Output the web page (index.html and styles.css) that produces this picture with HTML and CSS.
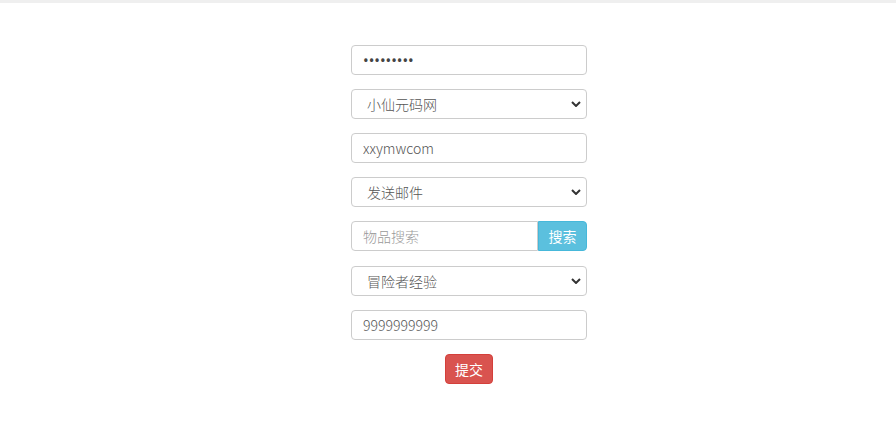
FILE: index.html
```html
<!DOCTYPE html>
<html lang="zh-CN">
<head>
<meta charset="utf-8">
<title>表单</title>
<link rel="stylesheet" href="styles.css">
</head>
<body>
<div class="topbar"></div>
<form class="form">
  <input class="control control-password" type="password" value="123456789">
  <div class="select-wrap">
    <select class="control select"><option>小仙元码网</option></select>
    <svg class="chev" width="10" height="6" viewBox="0 0 10 6"><path d="M1 1 L5 5 L9 1" fill="none" stroke="#333" stroke-width="2"/></svg>
  </div>
  <input class="control" type="text" value="xxymwcom">
  <div class="select-wrap">
    <select class="control select"><option>发送邮件</option></select>
    <svg class="chev" width="10" height="6" viewBox="0 0 10 6"><path d="M1 1 L5 5 L9 1" fill="none" stroke="#333" stroke-width="2"/></svg>
  </div>
  <div class="group">
    <input class="control group-input" type="text" placeholder="物品搜索">
    <button type="button" class="btn btn-info">搜索</button>
  </div>
  <div class="select-wrap">
    <select class="control select"><option>冒险者经验</option></select>
    <svg class="chev" width="10" height="6" viewBox="0 0 10 6"><path d="M1 1 L5 5 L9 1" fill="none" stroke="#333" stroke-width="2"/></svg>
  </div>
  <input class="control" type="text" value="9999999999">
  <div class="actions">
    <button type="button" class="btn btn-danger">提交</button>
  </div>
</form>
</body>
</html>
```
FILE: styles.css
```css
html, body {
  margin: 0;
  padding: 0;
  background: #fff;
}
body {
  font-family: "Noto Sans CJK SC", "Noto Sans", sans-serif;
  font-size: 14px;
  font-weight: 300;
  color: #555;
}
.topbar {
  height: 3px;
  background: #efefef;
}
.form {
  width: 236px;
  margin: 42px 0 0 351px;
  display: flex;
  flex-direction: column;
  gap: 14px;
}
.control {
  box-sizing: border-box;
  display: block;
  width: 236px;
  height: 30px;
  margin: 0;
  padding: 0 11px;
  border: 1px solid #ccc;
  border-radius: 4px;
  background: #fff;
  font-family: "Noto Sans CJK SC", "Noto Sans", sans-serif;
  font-size: 14px;
  font-weight: 300;
  color: #555;
  outline: none;
}
.control-password {
  font-family: "Noto Sans", sans-serif;
  font-size: 15px;
  font-weight: 400;
  color: #444;
}
.control::placeholder {
  color: #999;
}
.select-wrap {
  position: relative;
}
.select {
  appearance: none;
  -webkit-appearance: none;
  padding-left: 15px;
}
.chev {
  position: absolute;
  right: 6px;
  top: 12px;
  pointer-events: none;
}
.group {
  display: flex;
  height: 31px;
}
.group-input {
  width: 187px;
  border-radius: 4px 0 0 4px;
}
.btn {
  box-sizing: border-box;
  height: 30px;
  margin: 0;
  padding: 0;
  border: 1px solid transparent;
  border-radius: 4px;
  font-family: "Noto Sans CJK SC", "Noto Sans", sans-serif;
  font-size: 14px;
  font-weight: 400;
  color: #fff;
  white-space: nowrap;
  cursor: pointer;
}
.btn-info {
  width: 49px;
  background: #5bc0de;
  border-color: #46b8da;
  border-radius: 0 4px 4px 0;
}
.btn-danger {
  width: 48px;
  background: #d9534f;
  border-color: #d43f3a;
}
.actions {
  display: flex;
  justify-content: center;
}
```
